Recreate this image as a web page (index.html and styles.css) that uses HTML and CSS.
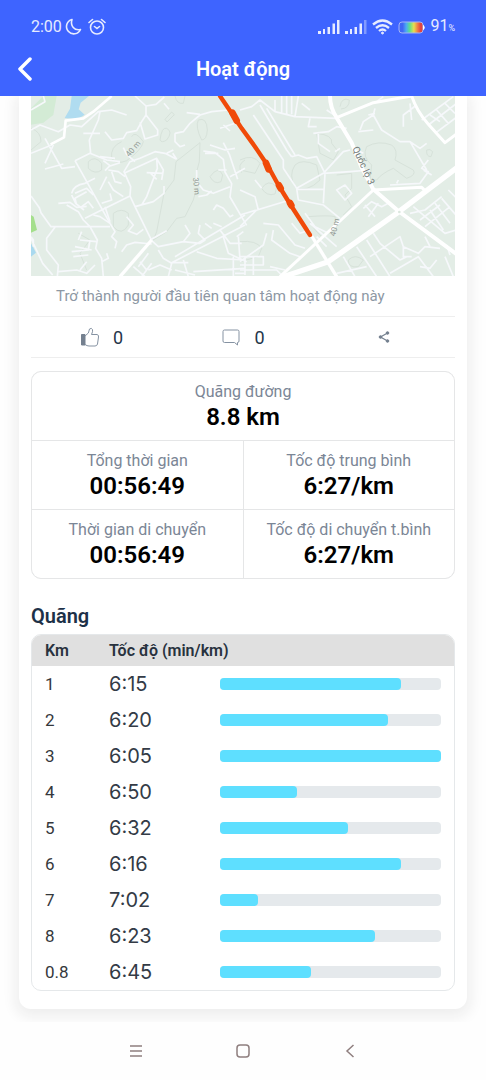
FILE: index.html
```
<!DOCTYPE html>
<html lang="vi">
<head>
  <meta charset="UTF-8">
  <meta name="viewport" content="width=device-width, initial-scale=1.0">
  <title>Hoạt động</title>
  <link rel="stylesheet" href="styles.css">
</head>
<body>
  <header class="header">
    <div class="status-bar">
      <div class="status-left">
        <span>2:00</span>
        <svg width="18" height="18" viewBox="0 0 18 18" fill="none" stroke="currentColor" stroke-width="1.6" stroke-linejoin="round"><path d="M8 1.500A7.300 7.300 0 1 0 16.500 11.500C10.500 13 6 8 8 1.500Z"/></svg>
        <svg class="alarm" width="18" height="18" viewBox="0 0 18 18" fill="none" stroke="currentColor" stroke-width="1.600" stroke-linecap="round"><circle cx="9" cy="9.500" r="6.500"/><path d="M1 4.500 4.500 1.500M17 4.500 13.500 1.500M6.500 8.500 9 10.500 11.500 8.500"/></svg>
      </div>
      <div class="status-right">
        <svg width="22" height="14" viewBox="0 0 22 14" fill="currentColor"><path d="M0 11h3v3H0zM5 9h2v5H5zM9.500 7h2.500v7H9.500zM14.500 3.500H17V14h-2.500zM19 0h2.500v14H19z"/></svg>
        <svg width="22" height="14" viewBox="0 0 22 14" fill="currentColor"><path d="M0 11h3v3H0zM5 9h2v5H5zM9.500 7h2.500v7H9.500zM14.500 3.500H17V14h-2.500z"/><path opacity=".4" d="M19 0h2.500v14H19z"/></svg>
        <svg width="21" height="16" viewBox="0 0 21 16" fill="none" stroke="currentColor" stroke-width="2.300"><path d="M1 5.500Q10.500-2.500 20 5.500M4 9Q10.500 3.500 17 9M7 12Q10.500 9 14 12"/><circle cx="10.500" cy="14" r="1" fill="currentColor" stroke-width="1"/></svg>
        <svg width="27" height="13" viewBox="0 0 27 13">
          <defs>
            <linearGradient id="charge">
              <stop offset=".15" stop-color="#4066f5"/>
              <stop offset=".3" stop-color="#4caaf5"/>
              <stop offset=".45" stop-color="#5fe08a"/>
              <stop offset=".62" stop-color="#e8dc50"/>
              <stop offset=".78" stop-color="#ef7a45"/>
              <stop offset=".9" stop-color="#e04440"/>
            </linearGradient>
          </defs>
          <rect x="1" y="1" width="24" height="11" rx="3" fill="url(#charge)" stroke="#a4b4f5"/>
          <path d="M25.500 4.500q1.500 2 0 4z" fill="#fff" stroke="#fff"/>
        </svg>
        <span>91<small>%</small></span>
      </div>
    </div>
    <div class="title-bar">
      <button class="back" type="button" aria-label="Quay lại">
        <svg width="16" height="26" viewBox="0 0 16 26" fill="none" stroke="currentColor" stroke-width="3.500" stroke-linecap="round" stroke-linejoin="round"><path d="M14 3 4 13 14 23"/></svg>
      </button>
      <h1>Hoạt động</h1>
    </div>
  </header>

  <main class="content">
    <article class="card">
      <svg class="map" viewBox="33 18 1272 540" role="img" aria-label="Bản đồ">
        <rect x="33" y="18" width="1272" height="543" fill="#e3ede6"/>
        <!-- parks and water -->
        <path fill="#d3ebd5" d="M33 55 70 18h40L100 75 70 98 33 104z"/>
        <path fill="#b0dcf0" d="M155 18h52l-25 20-6 20 18 16-22 14-38-4 16-28z"/>
        <path fill="#a4df8c" d="M33 375l8 5 10 40-18 8z"/>
        <path fill="#a9d9ef" d="M33 460l15 28-15 12z"/>
        <!-- contour lines -->
        <g class="contour">
          <path d="M540 158 468 215 462 270 432 310 410 425 400 450 440 425 470 385 495 380 520 330 528 300M540 158 538 215 530 245"/>
          <path d="M335 140Q345 120 370 155 365 180 320 212 290 225 275 205 270 170 305 155M420 150Q425 110 440 115 460 125 440 150 425 160 420 150M535 90Q560 80 562 120 560 150 545 150 525 110 535 90M435 88l20-22 8 8-22 22zM280 370q25-18 45 0v35q-20 35-45 5zM205 215q20-20 40 5v20q-20 15-40-5zM465 18q5 25 25 22l5-22M570 260q25-35 38-5l-5 20q-20 10-33-15M33 115q30 10 30 40l-30 25M175 430l35 20-30 40 20 50M675 210q-25 15-10 38"/>
          <g transform="translate(660 0)">
            <path d="M380 170q35-20 75-5 20 15 10 45l55 30q10 15-20 25l-40-30q-35 15-50 35l-20 0 5-45q-30-25-15-55zM165 225q20-20 65 0l10 45q-40 40-75 20-20-35 0-65zM230 130q50 5 45 30l20 25-15 25-40-20zM0 210q40-20 60 10l-15 30-45-10M65 295q20-30 45-5l-5 22q-25 8-40-17M290 255l45-5v45l-20 20 20 35-25 25M205 380q60-5 80 0l5 40-45 20q-30-25-40-60M300 50q5-30 28-20 0 25-25 27M0 455q50-5 65 20l-10 25-55 15M325 510q20-20 45 0l-15 20q-30 5-30-20M560 180q10-5 18 5l-5 15q-15 0-13-20"/>
          </g>
        </g>
        <!-- small streets -->
        <g class="street">
          <path d="M33 60 75 35 70 18M33 120 60 105 115 125 150 105 185 110 235 65 275 60 320 75M33 190 95 165M75 145l50 90 40-5M75 237l55-15M100 165 75 220M165 212l45-22 50 20 40 5M212 190 208 150 235 90 240 65M190 130h50M165 212 270 400M155 310q5-25 40-30l30-15M165 310l35-15 20 20M170 345l-5-20 35-20M185 350l20-15 15 20M155 315l12 25 25 20M195 385 330 318 345 350 395 452M330 318 332 290 312 245 330 215 360 205 405 185 435 190 470 208M312 250 410 205 412 235 380 320 365 345M345 350 400 335 432 310 432 288M380 248 430 250M390 248l20 20M410 205l20 35-5 30M440 190l20-10M458 190l12 18M345 215l-25-22-10-20M250 212l20 15-15 15M240 200l45 5M300 218l-30 10M265 240l30 5 20 15M275 245l10 30 20 5M240 300l20-40M265 275l15 25 30 20M245 340l30-10-5-20"/>
          <path d="M255 125 275 150 310 145 320 128 350 122 365 95 378 75 378 48 345 18M378 48l30-5 25-22M378 75l35 45 0 15-38 12-15-50M432 40l15 18M465 130l25-5 20-25 30-25 35-10 50-5M500 68l40 5M465 130v25l15 15 15-5M600 115l45-15M610 105l20 18M570 165l45 15 30-5M550 183l35 5 25 20 5 38 20 35-5 40 50 85M610 158l18 35 25 75M595 240l25 0M630 260l45-25M555 190l40 0M530 240l0 35 20 25 30 10 50-20M535 320l25-5 15-12M580 360l10-15 20 10 20 25 10-5M33 318l25 35 5 15 30 42H270M115 340l35-3 20 15 30-3M140 345l35 20 15 25 20 20 22 40-5 25 18 30 5 55M105 412 80 445 80 480 115 525 112 560M33 445l35 75 30 35M40 470l0-20-7-10M115 545l55-5 30 10 25-25M155 485l50-5 5-30M160 500l45-5M165 470l50 10M180 450l50 5M185 425l-10 25M180 540l20-25M245 515l20-10-5-15M270 400l15 25-10 15 15 15-5 20"/>
          <path d="M270 400l-30-20-20-5M255 350l15 45M305 485l15-20 25-8 50 5M320 380l20 25-15 18 25 10 20-15M395 452l20 18 75-15 20-25-15-25M390 450l50-28M490 455l50 5 15-10-20-20 5-25M340 530l35 30M360 515l20 25M355 530l30-40M385 540l35-15 35 15M365 560l30-40M415 480l15 25 25 15-10 40M455 518 675 405M465 500 675 375M555 400l20 15M580 400l25 10M600 420l30 40 35 0M610 440l15 50 55 25M530 485l60 20 85 5M490 510l15 50M455 518h50M465 540l60 15M520 545l155-10M640 500v60M655 440l5 70M670 425l-20 15M645 550h30"/>
          <g transform="translate(660 0)">
            <path d="M0 60 35 50 60 30 105 65 165 80 290 85M60 45 140 180 155 200M40 75 130 210 130 235M80 55 165 195M105 65V30M165 80 175 18M125 18v50M140 18v55M155 18v55M185 40l25 20M260 60l30 20M210 85l-5 25 25 0M220 130l45-5 25-15 30 5M235 130v30l35 25M285 185l15-10M250 250 310 185 330 180M250 250l80-5 60-5M155 200l20-5 25 10 30-5 25 50-5 90M130 235l40 60 5 35 75 15 50 40M250 250l-80 45M170 298h80M290 300l25-15 20 25-20 20zM0 300l45 20 10 40M0 375l150-45M0 410l50-50M45 270l20 25M70 400l45 5 50 60 30 10M100 420l-5 30 55 40 30 10M80 430l-10 35-70 50M155 400l25 30 30-10M195 370l30 40 40 20M210 400l80 70"/>
            <path d="M360 120l10-25 30-20 5-20M405 70l-20 5M400 75l25 45 55 35 30 0 50 85M355 125l45-5M490 110V75l40-30M430 20l-20 15M510 155l30 20 20-15M565 210l-20 25 20 10-25 35-90 5M550 240l25 15M470 280l5-10M545 90 640 20M565 105 650 40M585 130 665 70M590 60l35 40M615 40l30 30M570 75l30 20M350 180l20 10M515 90l-5-50M370 355l25-20 30 15 20-10M385 380l30-40M375 345l30 35M510 370l45-10 50-40M540 390l60-45M555 410l75-60M570 360l40 60M585 340l45 60M605 325l60 70M625 300l40 40M520 350l95 80 35-10M350 470l60 90M380 450l70 110M310 500l35 60M400 430l20 30 60 50 20-10M390 500l90-60 10 30 45 20 20-20 45 5M490 470l0 30 25 0M450 550l85-50 45 60M540 530l30 5 20-25M555 440l15 30M615 500l25 60M620 465l10 30M290 550l90-20M0 500h70v25H0M0 540h60M15 500v55M40 500v55M60 540l50 0 20 20M90 530l45 10M230 440l30 30"/>
          </g>
        </g>
        <!-- main roads -->
        <g class="road">
          <path d="M92 163 132 142 137 92 190 85 220 65 275 18" stroke-width="8"/>
          <path d="M300 560 395 450" stroke-width="10"/>
          <g transform="translate(660 0)">
            <path d="M270 18q0 35 20 65l45 75 30 75 35 65 75 65 175 130" stroke-width="12"/>
            <path d="M290 83l110-45 115-20q15 45 50 85l50 55 40-30" stroke-width="9"/>
            <path d="M120 560 400 300l145-8 10 10" stroke-width="9"/>
            <path d="M130 560 265 515 470 370 655 230" stroke-width="16"/>
            <path d="M213 435 290 560" stroke-width="10"/>
          </g>
        </g>
        <circle cx="1138" cy="366" r="4" fill="#dce8df"/>
        <!-- running track -->
        <path class="track" d="M600 18 632 65 665 115 705 170 742 225 775 285 812 345 870 435"/>
        <path class="track wide" d="M637 68 650 92M738 219 746 238M777 286 782 295M810 339 814 346"/>
        <g class="map-label">
          <text transform="translate(328 202) rotate(-50)" font-size="24">40 m</text>
          <text transform="translate(519 263) rotate(85)" font-size="23">30 m</text>
          <text transform="translate(945 440) rotate(-75)" font-size="24">40 m</text>
          <text class="road-name" transform="translate(997 175) rotate(66)" font-size="29">Quốc lộ 3</text>
        </g>
      </svg>

      <p class="hint">Trở thành người đầu tiên quan tâm hoạt động này</p>

      <div class="actions">
        <button type="button" aria-label="Thích">
          <svg width="20" height="20" viewBox="0 0 20 20" fill="none" stroke="#8592a2"><path d="M1.500 7.500h3.500v10.500H1.500z" fill="#74808f" stroke="#74808f"/><path d="M5 9q4.500-2.500 4.500-7 2-1.500 3 .5.500 2-1 5h5.500q2 .500 1.500 2.500L17.500 17q-.500 2-2.500 2H9q-2 0-4-1.500"/></svg>
          <span>0</span>
        </button>
        <button type="button" aria-label="Bình luận">
          <svg width="20" height="20" viewBox="0 0 20 20" fill="none" stroke="#8592a2" stroke-linejoin="round"><path d="M3.500 3h13q1.500 0 1.500 1.500v9.500q0 1.500-1.500 1.500v2.500L13.500 15.500h-10q-1.500 0-1.500-1.500v-9.500Q2 3 3.500 3Z"/></svg>
          <span>0</span>
        </button>
        <button type="button" aria-label="Chia sẻ">
          <svg width="12" height="12" viewBox="0 0 12 12" fill="#74808f" stroke="#74808f"><path d="M9.500 2 2.500 6l7 4" fill="none" stroke-width="1.200"/><circle cx="9.500" cy="2" r="1.300"/><circle cx="2.500" cy="6" r="1.300"/><circle cx="9.500" cy="10" r="1.300"/></svg>
        </button>
      </div>

      <dl class="stats">
        <div class="stat full">
          <dt>Quãng đường</dt>
          <dd>8.8 km</dd>
        </div>
        <div class="stat">
          <dt>Tổng thời gian</dt>
          <dd>00:56:49</dd>
        </div>
        <div class="stat">
          <dt>Tốc độ trung bình</dt>
          <dd>6:27/km</dd>
        </div>
        <div class="stat">
          <dt>Thời gian di chuyển</dt>
          <dd>00:56:49</dd>
        </div>
        <div class="stat">
          <dt>Tốc độ di chuyển t.bình</dt>
          <dd>6:27/km</dd>
        </div>
      </dl>

      <h2>Quãng</h2>
      <div class="splits">
        <table>
          <colgroup>
            <col class="col-km">
            <col class="col-pace">
            <col>
          </colgroup>
          <thead>
            <tr><th class="km">Km</th><th colspan="2">Tốc độ (min/km)</th></tr>
          </thead>
          <tbody>
            <tr><td class="km">1</td><td class="pace">6:15</td><td><div class="bar"><div class="fill" style="width: 82%"></div></div></td></tr>
            <tr><td class="km">2</td><td class="pace">6:20</td><td><div class="bar"><div class="fill" style="width: 76%"></div></div></td></tr>
            <tr><td class="km">3</td><td class="pace">6:05</td><td><div class="bar"><div class="fill" style="width: 100%"></div></div></td></tr>
            <tr><td class="km">4</td><td class="pace">6:50</td><td><div class="bar"><div class="fill" style="width: 35%"></div></div></td></tr>
            <tr><td class="km">5</td><td class="pace">6:32</td><td><div class="bar"><div class="fill" style="width: 58%"></div></div></td></tr>
            <tr><td class="km">6</td><td class="pace">6:16</td><td><div class="bar"><div class="fill" style="width: 82%"></div></div></td></tr>
            <tr><td class="km">7</td><td class="pace">7:02</td><td><div class="bar"><div class="fill" style="width: 17%"></div></div></td></tr>
            <tr><td class="km">8</td><td class="pace">6:23</td><td><div class="bar"><div class="fill" style="width: 70%"></div></div></td></tr>
            <tr><td class="km">0.8</td><td class="pace">6:45</td><td><div class="bar"><div class="fill" style="width: 41%"></div></div></td></tr>
          </tbody>
        </table>
      </div>
    </article>
  </main>

  <nav class="nav-bar">
    <button type="button" aria-label="Menu">
      <svg width="16" height="16" viewBox="0 0 16 16" fill="none" stroke="currentColor" stroke-width="1.300"><path d="M2 3h12M2 8h12M2 13h12"/></svg>
    </button>
    <button type="button" aria-label="Trang chủ">
      <svg width="16" height="16" viewBox="0 0 16 16" fill="none" stroke="currentColor" stroke-width="1.500"><rect x="2" y="2" width="12" height="12" rx="3"/></svg>
    </button>
    <button type="button" aria-label="Trở lại">
      <svg width="16" height="16" viewBox="0 0 16 16" fill="none" stroke="currentColor" stroke-width="1.500"><path d="M11.500 2 5 8l6.500 6"/></svg>
    </button>
  </nav>
</body>
</html>
```
FILE: styles.css
```
* {
  box-sizing: border-box;
}
body {
  margin: 0;
  font-family: Roboto, sans-serif;
  background-color: #fefefe;
  color: #25364a;
}
button {
  padding: 0;
  border: none;
  background: none;
  color: inherit;
  font: inherit;
  cursor: pointer;
}
svg {
  display: block;
}
.header {
  height: 96px;
  background-color: #3e64ff;
  color: white;
}
.status-bar {
  display: flex;
  justify-content: space-between;
  padding: 16px 31px 0;
  height: 46px;
  font-size: 16px;
  line-height: 22px;
  color: #e6ebff;
}
.status-left,
.status-right {
  display: flex;
  align-items: center;
  height: 22px;
}
.status-left {
  gap: 2px;
}
.alarm {
  margin-left: 4px;
}
.status-right {
  gap: 5px;
}
.status-right small {
  font-size: 9px;
}
.title-bar {
  display: grid;
  grid-template-columns: 32px 1fr 32px;
  align-items: center;
  height: 46px;
  padding: 0 16px;
}
.title-bar h1 {
  margin: 0;
  font-size: 20px;
  line-height: 24px;
  font-weight: 600;
  text-align: center;
}
.content {
  overflow: hidden;
  padding: 0 19px 13px;
}
.card {
  padding: 0 12px 18px;
  border-radius: 0 0 12px 12px;
  background-color: white;
  box-shadow: 0 4px 14px 4px #eeeeee;
}
.map {
  width: 100%;
  height: auto;
}
.contour {
  fill: none;
  stroke: #d7e2da;
  stroke-width: 3;
}
.street {
  fill: none;
  stroke: #f6f8fb;
  stroke-width: 5;
  stroke-linejoin: round;
}
.road {
  fill: none;
  stroke: white;
  stroke-linejoin: round;
}
.track {
  fill: none;
  stroke: #f04a08;
  stroke-width: 13;
  stroke-linecap: round;
  stroke-linejoin: round;
}
.wide {
  stroke-width: 20;
}
.map-label {
  fill: #929994;
}
.road-name {
  fill: #717774;
}
.hint {
  margin: 0;
  padding: 10px 25px;
  font-size: 15px;
  line-height: 20px;
  color: #8d98a4;
}
.actions {
  display: grid;
  grid-template-columns: repeat(3, 1fr);
  height: 42px;
  border-top: 1px solid #eeeeee;
  border-bottom: 1px solid #eeeeee;
}
.actions button {
  display: flex;
  align-items: center;
  justify-content: center;
  gap: 13px;
  font-size: 18px;
}
.stats {
  display: grid;
  grid-template-columns: 1fr 1fr;
  gap: 1px;
  margin: 13px 0 25px;
  overflow: hidden;
  border: 1px solid #e5e6e7;
  border-radius: 10px;
  background-color: #e5e6e7;
}
.stat {
  padding: 9px 0 8px;
  background-color: white;
  text-align: center;
}
.full {
  grid-column: 1 / 3;
}
.stat dt {
  font-size: 16px;
  line-height: 21px;
  color: #7b8696;
}
.stat dd {
  margin: 0;
  font-size: 24px;
  line-height: 30px;
  font-weight: 600;
  color: black;
}
h2 {
  margin: 0 0 6px;
  font-size: 20px;
  line-height: 24px;
  font-weight: 600;
  color: #1d3148;
}
.splits {
  overflow: hidden;
  border: 1px solid #e5e8ea;
  border-radius: 10px;
}
table {
  width: 100%;
  table-layout: fixed;
  border-collapse: collapse;
}
.col-km {
  width: 77px;
}
.col-pace {
  width: 111px;
}
th {
  height: 31px;
  padding: 0;
  background-color: #e0e0e0;
  font-size: 16px;
  line-height: 20px;
  font-weight: 600;
  text-align: left;
  color: #28323e;
}
td {
  height: 36px;
  padding: 0 13px 0 0;
  font-size: 17px;
  line-height: 20px;
  color: #35383c;
}
.km {
  padding: 0 0 0 13px;
}
.pace {
  padding: 0;
  font-family: Inter, sans-serif;
  font-size: 20px;
  color: #333b46;
}
.bar {
  height: 12px;
  border-radius: 4px;
  background-color: #e5e9ec;
}
.fill {
  height: 12px;
  border-radius: 4px;
  background-color: #5edfff;
}
.nav-bar {
  display: flex;
  justify-content: center;
  gap: 91px;
  padding: 21px 0;
  color: #8f7f7f;
}
```
